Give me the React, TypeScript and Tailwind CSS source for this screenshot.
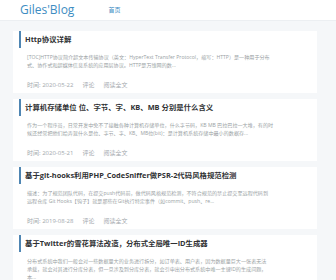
import React from 'react';

type Post = {
  title: string;
  lines: string[];
  date: string;
};

const posts: Post[] = [
  {
    title: 'Http协议详解',
    lines: [
      '[TOC]HTTP协议简介超文本传输协议（英文：HyperText Transfer Protocol，缩写：HTTP）是一种用于分布',
      '式、协作式和超媒体信息系统的应用层协议。HTTP是万维网的数...',
    ],
    date: '2020-05-22',
  },
  {
    title: '计算机存储单位 位、字节、字、KB、MB 分别是什么含义',
    lines: [
      '作为一个程序员，日常开发中免不了接触各种计算机存储单位，什么字节码，KB MB 巴拉巴拉一大堆，有的时',
      '候还经常把他们给弄混什么是位、字节、字、KB、MB位(bit)：是计算机系统存储中最小的数据存...',
    ],
    date: '2020-05-21',
  },
  {
    title: '基于git-hooks利用PHP_CodeSniffer做PSR-2代码风格规范检测',
    lines: [
      '描述：为了规范团队代码，在提交push代码前，做代码风格规范检测，不符合规范的禁止提交至远程代码到',
      '远程仓库 Git Hooks【钩子】就是那些在Git执行特定事件（如commit、push、re...',
    ],
    date: '2019-08-28',
  },
  {
    title: '基于Twitter的雪花算法改造，分布式全局唯一ID生成器',
    lines: [
      '分布式系统中我们一般会对一些数据量大的业务进行拆分，如订单表、用户表，因为数据量巨大一张表无法',
      '承载，就会对其进行分库分表，但一旦涉及到分库分表，就会引申出分布式系统中唯一主键ID的生成问题，',
      '本...',
    ],
    date: '',
  },
];

const font = { fontFamily: '"Open Sans","Noto Sans CJK SC",sans-serif' };

function PostCard({ post }: { post: Post }) {
  return (
    <article className="bg-white h-[62px] shrink-0 overflow-hidden">
      {/* 标题 */}
      <div className="flex items-center h-[17px] ml-[6px] border-l-2 border-[#4f86b3] pl-[4px]">
        <h2 className="text-[7.4px] leading-[17px] font-bold text-[#2f3133] whitespace-nowrap">{post.title}</h2>
      </div>
      {/* 摘要 */}
      <div className="mt-[5px] pl-[14px] text-[5.1px] leading-[8px] text-[#9a9fa4]">
        {post.lines.map((l, i) => (
          <p key={i} className="whitespace-nowrap">{l}</p>
        ))}
      </div>
      {post.date && (
        <div className="mt-[12px] pl-[14px] flex gap-[9px] text-[6px] leading-[8px] text-[#a3a8ad]">
          <span>时间: {post.date}</span>
          <span>评论</span>
          <span>阅读全文</span>
        </div>
      )}
    </article>
  );
}

export default function App() {
  return (
    <div className="w-[336px] h-[280px] overflow-hidden bg-[#f5f7f9]" style={font}>
      <header className="h-[21px] bg-white border-b border-[#eceff2] flex items-center">
        <span className="ml-[20px] text-[12px] text-[#3d8dc2]">Giles'Blog</span>
        <span className="ml-[34px] text-[6px] text-[#3d8dc2]">首页</span>
      </header>
      <main className="pl-[13px] pt-[10px] w-[317px] flex flex-col gap-[6px]">
        {posts.map((p) => (
          <PostCard key={p.title} post={p} />
        ))}
      </main>
    </div>
  );
}
